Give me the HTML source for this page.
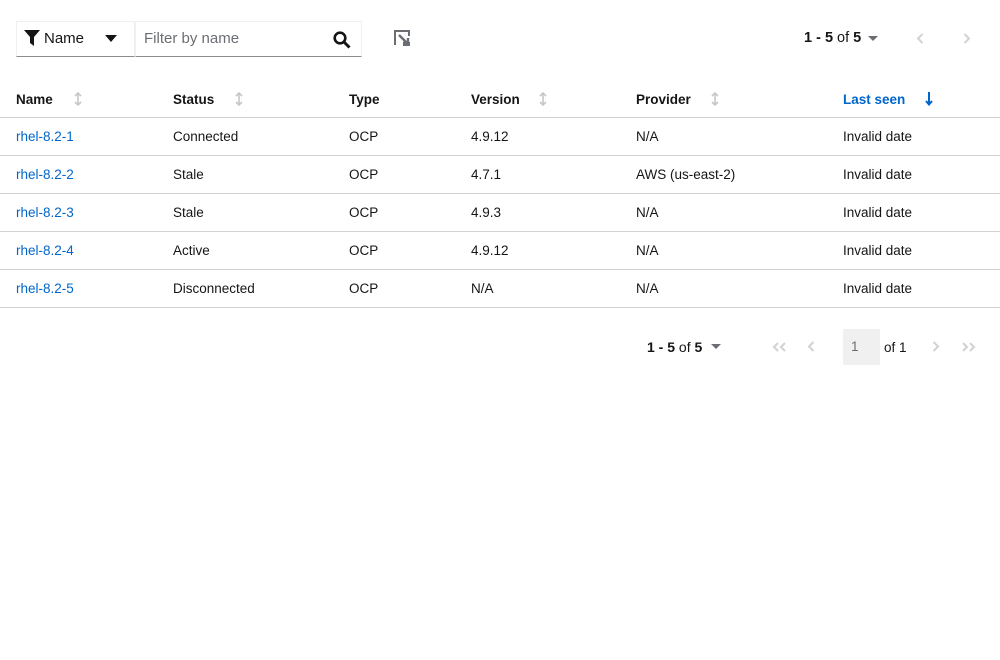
<!DOCTYPE html>
<html><head><meta charset="utf-8"><style>
*{box-sizing:border-box;margin:0;padding:0}
body{width:1000px;height:660px;background:#fff;font-family:"Liberation Sans",sans-serif;font-size:14px;color:#151515;position:relative;overflow:hidden}
.abs{position:absolute}
.sel{left:16px;top:21px;width:119px;height:36px;border:1px solid #f0f0f0;border-bottom:1px solid #8a8d90;}
.inp{left:135px;top:21px;width:227px;height:36px;border:1px solid #f0f0f0;border-bottom:1px solid #8a8d90;}
.h{font-weight:bold;top:92px;font-size:13.5px}
.line{position:absolute;left:0;width:1000px;height:1px;background:#d2d2d2}
a{color:#0066cc;text-decoration:none}
.r{position:absolute;left:0;width:1000px;font-size:13.5px}
</style></head><body>
<div class="abs sel"></div>
<svg class="abs" style="left:24px;top:30px" width="16" height="16" viewBox="0 0 16 16"><path d="M0 0h16L10 7v9l-4-3V7z" fill="#151515"/></svg>
<div class="abs" style="left:44px;top:30px;font-size:15px">Name</div>
<svg class="abs" style="left:105px;top:35px" width="12" height="7"><path d="M0 0h12L6 7z" fill="#151515"/></svg>
<div class="abs inp"></div>
<div class="abs" style="left:144px;top:30px;font-size:15px;color:#6a6e73">Filter by name</div>
<svg class="abs" style="left:333px;top:31px" width="18" height="18" viewBox="0 0 18 18"><circle cx="7" cy="7" r="5.3" stroke="#151515" stroke-width="2.6" fill="none"/><path d="M11 11l5.5 5.5" stroke="#151515" stroke-width="3"/></svg>
<svg class="abs" style="left:394px;top:30px" width="17" height="17" viewBox="0 0 17 17"><path d="M1 15V1h14v5M15 12v3H9" stroke="#6a6e73" stroke-width="2" fill="none"/><path d="M5 5l8 8M9 13h5V8" stroke="#6a6e73" stroke-width="2.4" fill="none"/></svg>
<div class="abs" style="left:804px;top:30px;font-size:14.5px"><span style="font-weight:600">1 - 5</span> of <span style="font-weight:600">5</span></div>
<svg class="abs" style="left:868px;top:36px" width="10" height="5"><path d="M0 0h10L5 5z" fill="#6a6e73"/></svg>
<svg class="abs" style="left:916px;top:33px" width="8" height="11"><path d="M6.5 1L2 5.5 6.5 10" stroke="#d2d2d2" stroke-width="2" fill="none"/></svg>
<svg class="abs" style="left:963px;top:33px" width="8" height="11"><path d="M1.5 1L6 5.5 1.5 10" stroke="#d2d2d2" stroke-width="2" fill="none"/></svg>

<svg width="0" height="0" style="position:absolute"><defs><symbol id="s" viewBox="0 0 8 14"><path d="M4 1v12M1 4l3-3 3 3M1 10l3 3 3-3" stroke="#c7c7c7" stroke-width="1.6" fill="none"/></symbol></defs></svg>
<div class="abs h" style="left:16px">Name</div><svg class="abs" style="left:74px;top:92px" width="8" height="14"><use href="#s"/></svg>
<div class="abs h" style="left:173px">Status</div><svg class="abs" style="left:235px;top:92px" width="8" height="14"><use href="#s"/></svg>
<div class="abs h" style="left:349px">Type</div>
<div class="abs h" style="left:471px">Version</div><svg class="abs" style="left:539px;top:92px" width="8" height="14"><use href="#s"/></svg>
<div class="abs h" style="left:636px">Provider</div><svg class="abs" style="left:711px;top:92px" width="8" height="14"><use href="#s"/></svg>
<div class="abs h" style="left:843px;color:#0066cc">Last seen</div>
<svg class="abs" style="left:925px;top:92px" width="8" height="14"><path d="M4 0v12M1 9l3 3.5 3-3.5" stroke="#0066cc" stroke-width="2" fill="none"/></svg>
<div class="line" style="top:117px"></div>

<div class="r" style="top:129px">
<a class="abs" style="left:16px">rhel-8.2-1</a><span class="abs" style="left:173px">Connected</span><span class="abs" style="left:349px">OCP</span><span class="abs" style="left:471px">4.9.12</span><span class="abs" style="left:636px">N/A</span><span class="abs" style="left:843px">Invalid date</span></div>
<div class="line" style="top:155px"></div>
<div class="r" style="top:167px">
<a class="abs" style="left:16px">rhel-8.2-2</a><span class="abs" style="left:173px">Stale</span><span class="abs" style="left:349px">OCP</span><span class="abs" style="left:471px">4.7.1</span><span class="abs" style="left:636px">AWS (us-east-2)</span><span class="abs" style="left:843px">Invalid date</span></div>
<div class="line" style="top:193px"></div>
<div class="r" style="top:205px">
<a class="abs" style="left:16px">rhel-8.2-3</a><span class="abs" style="left:173px">Stale</span><span class="abs" style="left:349px">OCP</span><span class="abs" style="left:471px">4.9.3</span><span class="abs" style="left:636px">N/A</span><span class="abs" style="left:843px">Invalid date</span></div>
<div class="line" style="top:231px"></div>
<div class="r" style="top:243px">
<a class="abs" style="left:16px">rhel-8.2-4</a><span class="abs" style="left:173px">Active</span><span class="abs" style="left:349px">OCP</span><span class="abs" style="left:471px">4.9.12</span><span class="abs" style="left:636px">N/A</span><span class="abs" style="left:843px">Invalid date</span></div>
<div class="line" style="top:269px"></div>
<div class="r" style="top:281px">
<a class="abs" style="left:16px">rhel-8.2-5</a><span class="abs" style="left:173px">Disconnected</span><span class="abs" style="left:349px">OCP</span><span class="abs" style="left:471px">N/A</span><span class="abs" style="left:636px">N/A</span><span class="abs" style="left:843px">Invalid date</span></div>
<div class="line" style="top:307px"></div>

<div class="abs" style="left:647px;top:339px;font-size:14px"><span style="font-weight:600">1 - 5</span> of <span style="font-weight:600">5</span></div>
<svg class="abs" style="left:711px;top:344px" width="10" height="5"><path d="M0 0h10L5 5z" fill="#6a6e73"/></svg>
<svg class="abs" style="left:772px;top:342px" width="16" height="10"><path d="M6 1L2 5l4 4M13 1L9 5l4 4" stroke="#d2d2d2" stroke-width="2" fill="none"/></svg>
<svg class="abs" style="left:807px;top:341px" width="8" height="11"><path d="M6.5 1L2 5.5 6.5 10" stroke="#d2d2d2" stroke-width="2" fill="none"/></svg>
<div class="abs" style="left:843px;top:329px;width:37px;height:36px;background:#f0f0f0;color:#6a6e73;padding:10px 0 0 8px;font-size:13.5px">1</div>
<div class="abs" style="left:884px;top:340px;font-size:13.5px">of 1</div>
<svg class="abs" style="left:932px;top:341px" width="8" height="11"><path d="M1.5 1L6 5.5 1.5 10" stroke="#d2d2d2" stroke-width="2" fill="none"/></svg>
<svg class="abs" style="left:960px;top:342px" width="16" height="10"><path d="M3 1l4 4-4 4M10 1l4 4-4 4" stroke="#d2d2d2" stroke-width="2" fill="none"/></svg>
</body></html>
